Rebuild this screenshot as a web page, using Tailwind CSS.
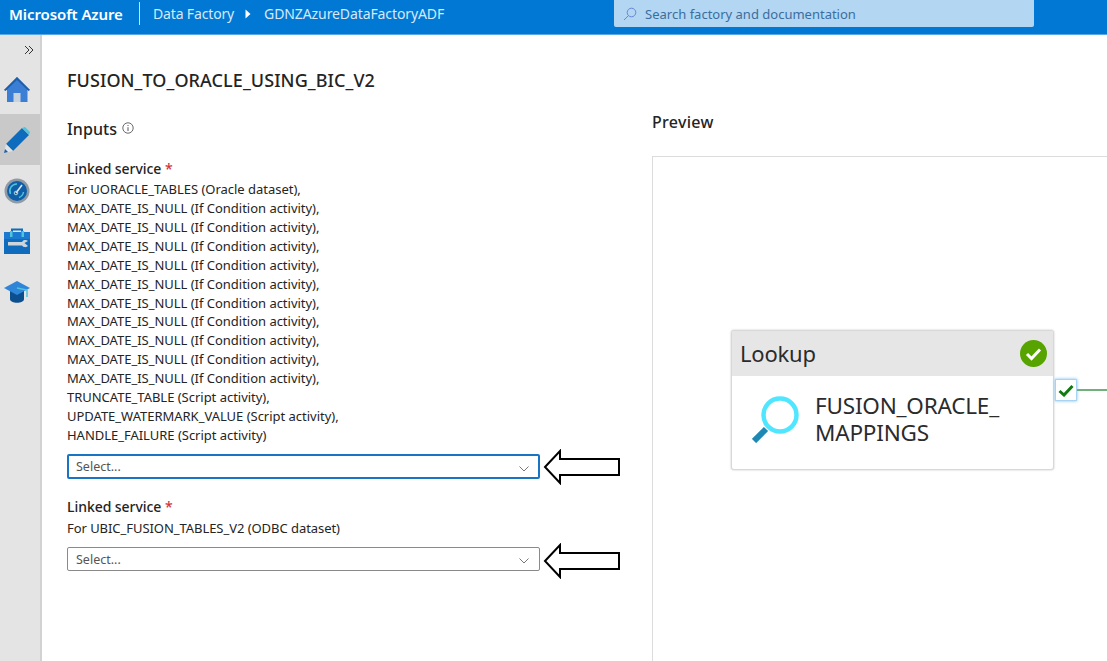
<!DOCTYPE html>
<html><head><meta charset="utf-8"><script src="https://cdn.jsdelivr.net/npm/@tailwindcss/browser@4"></script></head>
<body class="m-0 bg-white overflow-hidden font-['Noto_Sans',sans-serif]">
<div class="w-[1107px] h-[661px] flex flex-col overflow-hidden">
<header class="h-[35px] shrink-0 bg-[#0078d4] border-b border-[#5aa9e6] flex items-start text-[14px] leading-[28px] text-[#d6e9f8]">
  <span class="pl-[9px] w-[139px] font-semibold text-white text-[15px] tracking-[-0.1px] whitespace-nowrap">Microsoft Azure</span>
  <span class="w-px h-[23px] mt-[2px] bg-[#cfe5f7]"></span>
  <span class="ml-[13px] tracking-[-0.15px] whitespace-nowrap">Data Factory</span>
  <svg class="ml-[11px] mt-[9px]" width="6" height="10" viewBox="0 0 6 10"><path d="M0.5 0.5 L5.5 5 L0.5 9.5Z" fill="#fff"/></svg>
  <span class="ml-[13px] w-[350px] tracking-[-0.1px] whitespace-nowrap">GDNZAzureDataFactoryADF</span>
  <div class="w-[420px] h-[27px] bg-[#b3d6f2] rounded-b-[2px] flex items-center pl-[9px] text-[13px] text-[#3a6ea0]">
    <svg width="14" height="14" viewBox="0 0 14 14" fill="none" stroke="#6a84d8" stroke-width="1"><circle cx="8.5" cy="5.5" r="4.3"/><path d="M5.5 8.5 L1 13"/></svg>
    <span class="ml-[8px] whitespace-nowrap">Search factory and documentation</span>
  </div>
</header>
<div class="flex-1 flex min-h-0">
  <nav class="w-[42px] shrink-0 bg-[#e4e4e4] border-r-2 border-[#d2d2d2] flex flex-col">
    <div class="h-[42px] relative">
      <svg class="absolute left-[24px] top-[10px]" width="10" height="10" viewBox="0 0 10 10" fill="none" stroke="#333" stroke-width="1"><path d="M1 1 L5 5 L1 9M5 1 L9 5 L5 9"/></svg>
    </div>
    <div class="h-[37px] pl-[4px]">
      <svg width="26" height="26" viewBox="0 0 26 26"><path d="M13 0 L26 13 L23.5 13 L23.5 25 L3 25 L3 13 L0 13Z" fill="#3a7fd5"/><path d="M13 0 L26 13 L24.5 14 L13 3 L1.5 14 L0 13Z" fill="#1f5ea8"/><rect x="9.5" y="16" width="7" height="9" fill="#c9d3de"/></svg>
    </div>
    <div class="h-[51px] bg-[#c9c9c9] flex items-center pl-[4px]">
      <svg width="26" height="26" viewBox="0 0 26 26"><path d="M18 1 L25 8 L9 24 L2 17Z" fill="#0f6cbd"/><path d="M18 1 L21 0 L26 5 L25 8Z" fill="#50c4dc"/><path d="M2 17 L9 24 L0 26Z" fill="#dfe3e6"/><path d="M1 22 L4 25 L0 26Z" fill="#1b5fa8"/></svg>
    </div>
    <div class="h-[52px] flex items-center pl-[4px]">
      <svg width="26" height="26" viewBox="0 0 26 26" fill="none"><circle cx="13" cy="13" r="12.5" fill="#8f9aa5"/><circle cx="13" cy="13" r="10" fill="#0f5fa8"/><path d="M6.5 16 A7 7 0 0 1 13 6" stroke="#50c4dc" stroke-width="1.5"/><path d="M19.5 14 A7 7 0 0 1 15 19.5" stroke="#50c4dc" stroke-width="1.5"/><path d="M12 15 L18 7" stroke="#dfe8f0" stroke-width="1.5"/><circle cx="12" cy="15" r="1.8" stroke="#9fd8ea"/></svg>
    </div>
    <div class="h-[48px] flex items-center pl-[4px]">
      <svg width="26" height="26" viewBox="0 0 26 26"><path d="M8 5 V1.5 H18 V5" fill="none" stroke="#0f6cbd" stroke-width="2"/><rect x="0" y="4" width="26" height="22" fill="#0f6cbd"/><rect x="0" y="4" width="26" height="7" fill="#1b79cf"/><rect x="6" y="3" width="2.5" height="6" fill="#50c4dc"/><rect x="17.500" y="3" width="2.500" height="6" fill="#50c4dc"/><path d="M4 14 H18 A4 4 0 0 1 24 13 L20.500 15 L24 18 A4 4 0 0 1 18 17.500 H4Z" fill="#cfd4d8"/></svg>
    </div>
    <div class="pl-[4px] pt-[16px]">
      <svg width="26" height="22" viewBox="0 0 26 22"><path d="M6 10 V18 C6 23 20 23 20 18 V10Z" fill="#0b4f8f"/><path d="M13 0 L26 7 L13 14 L0 7Z" fill="#2f86d8"/><path d="M13 7 L23 9 V16" fill="none" stroke="#50c4dc" stroke-width="1.5"/></svg>
    </div>
  </nav>
  <main class="flex-1 flex min-w-0">
    <section class="w-[610px] shrink-0 pl-[25px] text-[#242424]">
      <h1 class="mt-[32px] text-[18px] leading-[26px] font-medium tracking-[0.08px] whitespace-nowrap">FUSION_TO_ORACLE_USING_BIC_V2</h1>
      <h2 class="mt-[25px] flex items-center text-[16px] leading-[22px] font-medium tracking-[0.1px]">Inputs
        <svg class="ml-[5px] -mt-[3px]" width="12" height="12" viewBox="0 0 12 12" fill="none" stroke="#444"><circle cx="6" cy="6" r="5.2" stroke-width="0.8"/><path d="M6 5.200V9M6 3V4" stroke-width="0.9"/></svg>
      </h2>
      <p class="mt-[19px] text-[14px] leading-[20px] font-medium tracking-[-0.05px]">Linked service <span class="text-[#d13438]">*</span></p>
      <div class="mt-[1px] text-[13px] leading-[18.92px] tracking-[-0.02px] whitespace-nowrap">
        <p>For UORACLE_TABLES (Oracle dataset),</p>
        <p>MAX_DATE_IS_NULL (If Condition activity),</p>
        <p>MAX_DATE_IS_NULL (If Condition activity),</p>
        <p>MAX_DATE_IS_NULL (If Condition activity),</p>
        <p>MAX_DATE_IS_NULL (If Condition activity),</p>
        <p>MAX_DATE_IS_NULL (If Condition activity),</p>
        <p>MAX_DATE_IS_NULL (If Condition activity),</p>
        <p>MAX_DATE_IS_NULL (If Condition activity),</p>
        <p>MAX_DATE_IS_NULL (If Condition activity),</p>
        <p>MAX_DATE_IS_NULL (If Condition activity),</p>
        <p>MAX_DATE_IS_NULL (If Condition activity),</p>
        <p>TRUNCATE_TABLE (Script activity),</p>
        <p>UPDATE_WATERMARK_VALUE (Script activity),</p>
        <p>HANDLE_FAILURE (Script activity)</p>
      </div>
      <div class="mt-[4px] flex items-center">
        <div class="w-[473px] h-[25px] border-2 border-[#1a74c4] rounded-[2px] flex items-center justify-between pl-[7px] pr-[9px] text-[12.5px] text-[#555]">
          <span>Select...</span>
          <svg class="mt-[5px]" width="10" height="6" viewBox="0 0 10 6" fill="none" stroke="#777"><path d="M0.5 0.5 L5 5 L9.500 0.5"/></svg>
        </div>
        <svg class="ml-[3px]" width="78" height="36" viewBox="0 0 78 36" fill="none" stroke="#000" stroke-width="2"><path d="M2 18 L17 2 V10 H76 V26 H17 V34Z"/></svg>
      </div>
      <p class="mt-[12px] text-[14px] leading-[20px] font-medium tracking-[-0.05px]">Linked service <span class="text-[#d13438]">*</span></p>
      <p class="mt-[2px] text-[13px] leading-[19px] tracking-[-0.05px] whitespace-nowrap">For UBIC_FUSION_TABLES_V2 (ODBC dataset)</p>
      <div class="mt-[1px] flex items-center">
        <div class="w-[473px] h-[24px] border border-[#8a8a8a] rounded-[2px] flex items-center justify-between pl-[8px] pr-[10px] text-[12.5px] text-[#555]">
          <span class="mt-[2px]">Select...</span>
          <svg class="mt-[5px]" width="10" height="6" viewBox="0 0 10 6" fill="none" stroke="#777"><path d="M0.5 0.5 L5 5 L9.500 0.5"/></svg>
        </div>
        <svg class="ml-[3px] mt-[4px]" width="78" height="36" viewBox="0 0 78 36" fill="none" stroke="#000" stroke-width="2"><path d="M2 18 L17 2 V10 H76 V26 H17 V34Z"/></svg>
      </div>
    </section>
    <section class="flex-1 min-w-0 flex flex-col">
      <h2 class="mt-[76px] text-[16px] leading-[22px] font-medium tracking-[0.3px] text-[#242424]">Preview</h2>
      <div class="relative mt-[23px] flex-1 border-l border-t border-[#dcdcdc] overflow-hidden -mb-px">
        <div class="absolute left-[78px] top-[173px] w-[323px] h-[140px] bg-white border border-[#d8d8d8] rounded-[3px] shadow-[0_0_2px_rgba(0,0,0,0.25)] overflow-hidden text-[#2b2b2b]">
          <div class="h-[45px] bg-[#e6e6e6] flex items-center justify-between pl-[8px] pr-[6px]">
            <span class="text-[22px] tracking-[-0.2px]">Lookup</span>
            <svg width="27" height="27" viewBox="0 0 27 27"><circle cx="13.500" cy="13.500" r="13.500" fill="#57a300"/><path d="M7 14 L11.500 18.500 L20 9.500" fill="none" stroke="#fff" stroke-width="3"/></svg>
          </div>
          <div class="flex pl-[20px] pt-[16px]">
            <svg class="mt-[3px]" width="48" height="48" viewBox="0 0 48 48" fill="none"><path d="M2 46 L14 34" stroke="#1e88b4" stroke-width="6"/><circle cx="28" cy="20" r="16.500" stroke="#50e6ff" stroke-width="4.500"/></svg>
            <div class="ml-[15px] text-[22.500px] leading-[27px] tracking-[-0.2px]">FUSION_ORACLE_<br>MAPPINGS</div>
          </div>
        </div>
        <div class="absolute left-[402px] top-[222px] w-[22px] h-[22px] bg-white border border-[#a9d3f2] shadow-[0_0_3px_#7fbdf0] flex items-center justify-center">
          <svg width="16" height="13" viewBox="0 0 16 13" fill="none"><path d="M1.500 7 L6 11 L14.500 2" stroke="#107c10" stroke-width="3"/></svg>
        </div>
        <div class="absolute left-[424px] top-[232px] w-[40px] h-[2px] bg-[#6fb07c]"></div>
      </div>
    </section>
  </main>
</div>
</div>
</body></html>
